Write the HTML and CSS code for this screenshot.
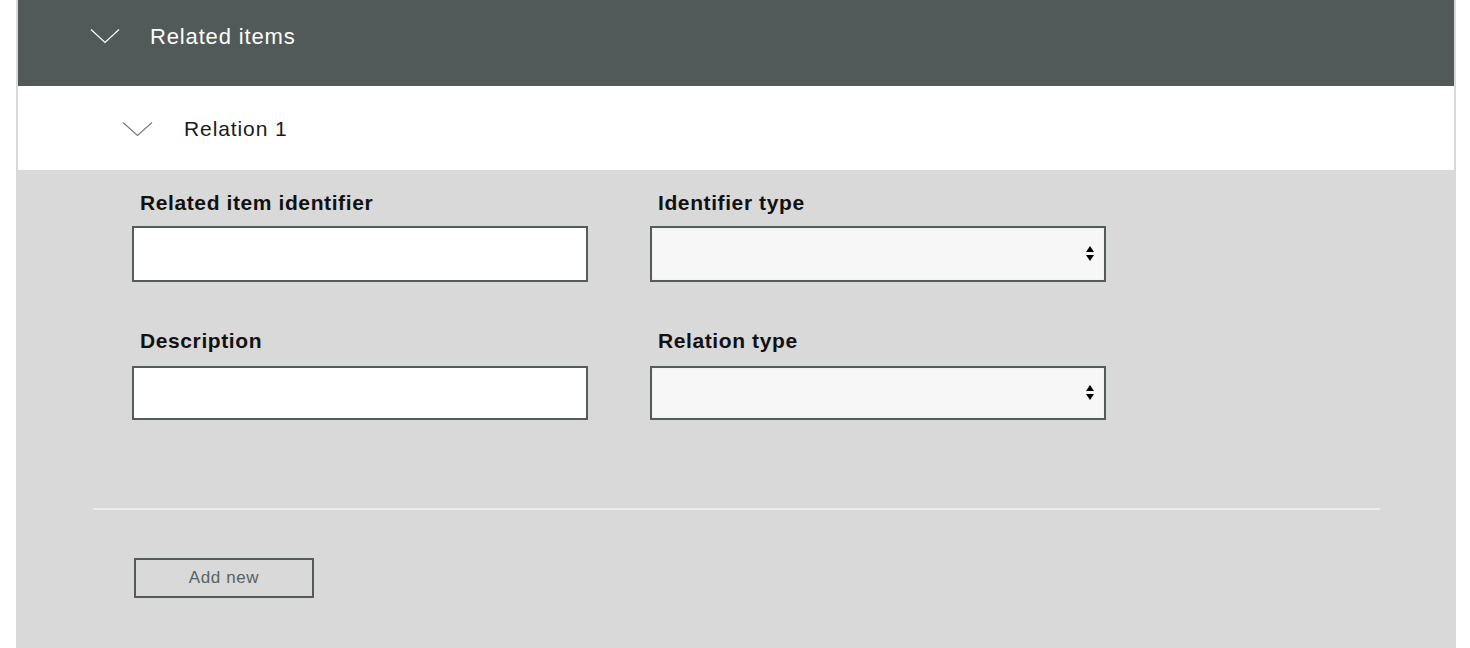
FILE: index.html
```html
<!DOCTYPE html>
<html lang="en">
<head>
<meta charset="utf-8">
<title>Related items</title>
<link rel="stylesheet" href="styles.css">
</head>
<body>
<section class="panel">
  <header class="section-header">
    <svg class="chevron" width="30" height="16" viewBox="0 0 30 16"><polyline points="1,1.5 15,14.5 29,1.5" fill="none" stroke="#ffffff" stroke-width="1.2"/></svg>
    <span class="section-title">Related items</span>
  </header>
  <div class="relation-header">
    <svg class="chevron" width="31" height="16" viewBox="0 0 31 16"><polyline points="1,1.5 15.5,14.5 30,1.5" fill="none" stroke="#7a7a7a" stroke-width="1.2"/></svg>
    <span class="relation-title">Relation 1</span>
  </div>
  <div class="form">
    <div class="form-grid">
      <div class="field">
        <label class="label" for="rid">Related item identifier</label>
        <input class="input tall" id="rid" type="text">
      </div>
      <div class="field">
        <label class="label" for="itype">Identifier type</label>
        <div class="select-wrap tall">
          <select class="select" id="itype"><option></option></select>
          <svg class="arrows" width="8" height="15" viewBox="0 0 8 15"><polygon points="4,0 8,6 0,6" fill="#000"/><polygon points="0,9 8,9 4,15" fill="#000"/></svg>
        </div>
      </div>
      <div class="field">
        <label class="label" for="desc">Description</label>
        <input class="input short" id="desc" type="text">
      </div>
      <div class="field">
        <label class="label" for="rtype">Relation type</label>
        <div class="select-wrap short">
          <select class="select" id="rtype"><option></option></select>
          <svg class="arrows" width="8" height="15" viewBox="0 0 8 15"><polygon points="4,0 8,6 0,6" fill="#000"/><polygon points="0,9 8,9 4,15" fill="#000"/></svg>
        </div>
      </div>
    </div>
  </div>
  <hr class="divider">
  <div class="actions">
    <button class="btn" type="button">Add new</button>
  </div>
</section>
</body>
</html>
```
FILE: styles.css
```css
* { box-sizing: border-box; }
html, body { margin: 0; padding: 0; background: #ffffff; }
body { font-family: "Liberation Sans", Arial, sans-serif; }

.panel {
  margin-left: 16px;
  width: 1440px;
  min-height: 648px;
  background: #d9d9d9;
}

.section-header {
  margin: 0 2px;
  height: 86px;
  background: #525a59;
  display: flex;
  align-items: flex-start;
  padding: 24px 0 0 72px;
  gap: 30px;
}
.section-header .chevron { margin-top: 4px; flex: none; }
.section-title {
  color: #ffffff;
  font-size: 22px;
  line-height: 26px;
  letter-spacing: 0.85px;
}

.relation-header {
  margin: 0 2px;
  height: 84px;
  background: #ffffff;
  display: flex;
  align-items: flex-start;
  padding: 31px 0 0 104px;
  gap: 31px;
}
.relation-header .chevron { margin-top: 4px; flex: none; }
.relation-title {
  color: #1a1a1a;
  font-size: 21px;
  line-height: 24px;
  letter-spacing: 0.9px;
}

.form { padding: 21px 0 0 116px; }
.form-grid {
  display: grid;
  grid-template-columns: 456px 456px;
  column-gap: 62px;
  row-gap: 47px;
}
.field { display: flex; flex-direction: column; }
.label {
  padding-left: 8px;
  margin-bottom: 11px;
  font-size: 21px;
  line-height: 24px;
  font-weight: bold;
  letter-spacing: 0.6px;
  color: #111111;
}
.field:nth-child(n+3) .label { margin-bottom: 13px; }

.input {
  width: 456px;
  border: 2px solid #545c5b;
  background: #ffffff;
  margin: 0;
  padding: 0 10px;
  font: inherit;
  outline: none;
}
.tall { height: 56px; }
.short { height: 54px; }

.select-wrap {
  position: relative;
  width: 456px;
}
.select {
  appearance: none;
  -webkit-appearance: none;
  width: 100%;
  height: 100%;
  border: 2px solid #545c5b;
  border-radius: 0;
  background: #f7f7f7;
  margin: 0;
  font: inherit;
  box-shadow: inset 0 0 2px rgba(0,0,0,0.08);
}
.arrows {
  position: absolute;
  right: 12px;
  top: 50%;
  margin-top: -8px;
  pointer-events: none;
}

.divider {
  margin: 88px 76px 0 77px;
  border: 0;
  height: 2px;
  background: #ececec;
}

.actions { padding: 48px 0 0 118px; }
.btn {
  width: 180px;
  height: 40px;
  border: 2px solid #545c5b;
  background: transparent;
  color: #5a6261;
  font-family: "Liberation Sans", Arial, sans-serif;
  font-size: 17px;
  letter-spacing: 0.6px;
  padding: 0;
}
```
